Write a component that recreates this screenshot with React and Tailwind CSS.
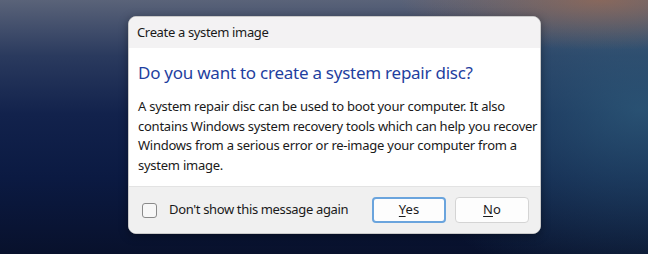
export default function App() {
  return (
    <div className="w-[648px] h-[254px] overflow-hidden bg-[radial-gradient(ellipse_200px_50px_at_600px_0px,rgba(150,105,85,0.8),transparent),radial-gradient(ellipse_260px_180px_at_640px_110px,rgba(50,100,130,0.7),transparent),linear-gradient(180deg,#5a6379_0%,#2a3a5e_22%,#12224c_45%,#0b1a42_70%,#08112c_100%)] pt-[16px] pl-[128px]" style={{ fontFamily: '"Noto Sans", "Open Sans", sans-serif' }}>
      <div className="w-[413px] h-[218px] rounded-[8px] overflow-hidden border border-[#c9c9c9] bg-white flex flex-col shadow-[0_2px_10px_rgba(0,0,0,0.35)]">
        <div className="h-[31px] bg-[#f3f2f3] flex items-center pl-[8px] text-[13px] tracking-[-0.35px] text-[#1a1a1a]">
          Create a system image
        </div>
        <div className="flex-1 bg-white pl-[9px] pr-[2px] pt-[13px]">
          <div className="text-[17px] tracking-[-0.25px] leading-[24px] text-[#1f3fa0]">
            Do you want to create a system repair disc?
          </div>
          <div className="mt-[12px] text-[13px] tracking-[-0.25px] leading-[19.7px] text-[#1a1a1a] whitespace-nowrap">
            A system repair disc can be used to boot your computer. It also<br />
            contains Windows system recovery tools which can help you recover<br />
            Windows from a serious error or re-image your computer from a<br />
            system image.
          </div>
        </div>
        <div className="h-[47px] bg-[#f0f0f0] border-t border-[#e3e3e3] flex items-center pl-[13px] pr-[11px]">
          <div className="w-[15px] h-[15px] rounded-[3px] border border-[#8a8a8a] bg-[#f7f7f7]" />
          <div className="ml-[12px] text-[13px] tracking-[-0.35px] text-[#1a1a1a]">Don't show this message again</div>
          <div className="ml-auto flex gap-[9px]">
            <button className="w-[74px] h-[26px] rounded-[4px] border-2 border-[#6aa4dd] bg-[#fdfdfd] text-[13px] text-[#1a1a1a] flex items-center justify-center">
              <span><span className="underline underline-offset-2">Y</span>es</span>
            </button>
            <button className="w-[74px] h-[26px] rounded-[4px] border border-[#d4d4d4] bg-[#fdfdfd] text-[13px] text-[#1a1a1a] flex items-center justify-center">
              <span><span className="underline underline-offset-2">N</span>o</span>
            </button>
          </div>
        </div>
      </div>
    </div>
  );
}
